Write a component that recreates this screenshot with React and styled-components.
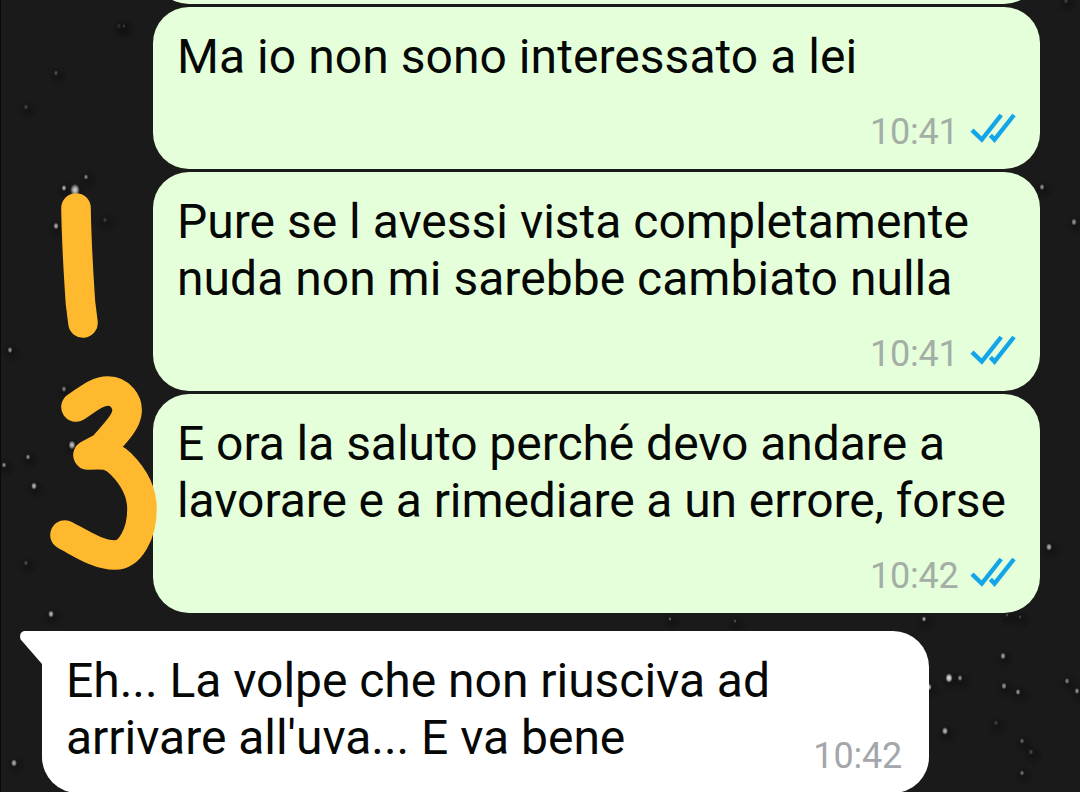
import styled, { createGlobalStyle } from "styled-components";

const GlobalStyle = createGlobalStyle`
  body {
    margin: 0;
    overflow: hidden;
    background: #1a1a1a;
  }
`;

const Chat = styled.main`
  position: relative;
  display: flex;
  flex-direction: column;
  width: 1080px;
  height: 792px;
  overflow: hidden;
  box-sizing: border-box;
  background: #1a1a1a;
  font-family: Roboto, "Liberation Sans", sans-serif;
`;

const Sky = styled.svg`
  position: absolute;
  inset: 0;
`;

const Drawing = styled.svg`
  position: absolute;
  inset: 0;
  fill: none;
  stroke: #ffb92e;
  stroke-width: 29.6px;
  stroke-linecap: round;
  stroke-linejoin: round;
`;

const Sent = styled.div`
  display: flex;
  flex-direction: column;
  align-items: flex-end;
  gap: 3px;
  padding-right: 40px;
`;

const Received = styled.div`
  display: flex;
  padding-left: 42px;
  margin-top: 18px;
`;

const Bubble = styled.article`
  position: relative;
  flex: none;
  width: 887px;
  height: ${(p) => p.$height}px;
  padding: ${(p) => (p.$incoming ? "21px 27px 0 24px" : "21px 24px 0 24px")};
  box-sizing: border-box;
  border-radius: ${(p) => (p.$incoming ? "0 36px 36px 36px" : "36px")};
  background: ${(p) => (p.$incoming ? "#ffffff" : "#e5ffdb")};
`;

const PreviousBubble = styled.div`
  width: 887px;
  height: 4px;
  overflow: hidden;
  display: flex;
  align-items: flex-end;
`;

const PreviousBody = styled.div`
  flex: none;
  width: 100%;
  height: 80px;
  border-radius: 36px;
  background: #e5ffdb;
`;

const Line = styled.p`
  margin: 0;
  height: 57px;
  line-height: 57px;
  font-size: 48px;
  letter-spacing: ${(p) => p.$spacing || 0}px;
  white-space: nowrap;
  color: #050805;
`;

const Meta = styled.div`
  display: flex;
  justify-content: flex-end;
  gap: 12px;
  height: 42px;
  margin-top: ${(p) => (p.$incoming ? -31 : 26)}px;
`;

const Time = styled.time`
  width: ${(p) => (p.$incoming ? "auto" : "88px")};
  line-height: 42px;
  font-size: 36px;
  letter-spacing: -0.2px;
  white-space: nowrap;
  color: ${(p) => (p.$incoming ? "#a3a6aa" : "#a3aea4")};
`;

const Ticks = styled.svg`
  flex: none;
  width: 46px;
  height: 30px;
  margin-top: 2px;
  fill: none;
  stroke: #12a5e8;
  stroke-width: 4.4px;
`;

const Tail = styled.svg`
  position: absolute;
  left: -22px;
  top: 0;
  width: 24px;
  height: 34px;
  fill: #ffffff;
`;

const messages = [
  {
    height: 162,
    time: "10:41",
    lines: [{ text: "Ma io non sono interessato a lei", spacing: 0.05 }],
  },
  {
    height: 219,
    time: "10:41",
    lines: [
      { text: "Pure se l avessi vista completamente" },
      { text: "nuda non mi sarebbe cambiato nulla", spacing: 0.03 },
    ],
  },
  {
    height: 219,
    time: "10:42",
    lines: [
      { text: "E ora la saluto perché devo andare a", spacing: -0.05 },
      { text: "lavorare e a rimediare a un errore, forse", spacing: -0.08 },
    ],
  },
];

// x, y, radius, opacity
const stars = [
  [119, 26, 2, 0.16],
  [124, 26, 1.5, 0.2],
  [56, 73, 2, 0.28],
  [26, 107, 2, 0.22],
  [64, 188, 2.2, 0.75],
  [75, 190, 4.4, 0.85],
  [86, 177, 2, 0.55],
  [56, 226, 2.5, 0.7],
  [105, 220, 2, 0.2],
  [10, 350, 2.2, 0.6],
  [64, 389, 2.2, 0.5],
  [72, 445, 3.2, 0.8],
  [28, 457, 2, 0.6],
  [4, 465, 2, 0.6],
  [34, 486, 2.6, 0.75],
  [26, 563, 2, 0.25],
  [51, 614, 2.6, 0.75],
  [14, 763, 2.7, 0.7],
  [1066, 1, 2, 0.2],
  [1042, 187, 2.2, 0.6],
  [1074, 222, 2.5, 0.6],
  [1049, 547, 2.7, 0.7],
  [924, 619, 2, 0.7],
  [1007, 615, 1.5, 0.25],
  [1020, 617, 1.5, 0.25],
  [1003, 656, 2.5, 0.65],
  [949, 678, 3.4, 0.95],
  [960, 678, 2.2, 0.6],
  [929, 687, 2.5, 0.8],
  [1004, 686, 2.4, 0.6],
  [1018, 692, 2.2, 0.6],
  [1067, 681, 2.2, 0.5],
  [1077, 691, 2.2, 0.6],
  [945, 731, 2.8, 0.75],
  [996, 723, 2, 0.2],
  [1022, 741, 2, 0.4],
  [1031, 752, 2, 0.25],
  [1022, 773, 2, 0.45],
  [670, 619, 1.5, 0.4],
  [735, 621, 1.5, 0.3],
];

const StarField = () => (
  <Sky width="1080" height="792" viewBox="0 0 1080 792">
    <defs>
      <radialGradient id="star">
        <stop offset="0" stopColor="#fff" />
        <stop offset="0.5" stopColor="#fff" stopOpacity="0.65" />
        <stop offset="1" stopColor="#fff" stopOpacity="0" />
      </radialGradient>
      <radialGradient id="shade">
        <stop offset="0" stopColor="#0c0c0c" />
        <stop offset="1" stopColor="#0c0c0c" stopOpacity="0" />
      </radialGradient>
    </defs>
    <rect width="1" height="792" fill="#000" opacity="0.6" />
    {stars.map(([x, y, r, opacity]) => (
      <g key={`${x}-${y}`}>
        <ellipse
          cx={x + 2}
          cy={y + 3}
          rx="11"
          ry="11"
          fill="url(#shade)"
          opacity="0.5"
        />
        <ellipse
          cx={x}
          cy={y}
          rx={r * 1.1}
          ry={r * 1.4}
          fill="url(#star)"
          opacity={opacity}
        />
      </g>
    ))}
  </Sky>
);

const ReadTicks = () => (
  <Ticks viewBox="0 0 46 30">
    <path d="M2 17.2 11.800 26.600 31.200 2" />
    <path d="M20.400 22.200 24.500 26.600 44 2" />
  </Ticks>
);

const SentMessage = ({ message }) => (
  <Bubble $height={message.height}>
    {message.lines.map((line) => (
      <Line key={line.text} $spacing={line.spacing}>
        {line.text}
      </Line>
    ))}
    <Meta>
      <Time>{message.time}</Time>
      <ReadTicks />
    </Meta>
  </Bubble>
);

const App = () => {
  return (
    <>
      <GlobalStyle />
      <Chat>
        <StarField />
        <Sent>
          <PreviousBubble>
            <PreviousBody />
          </PreviousBubble>
          {messages.map((message) => (
            <SentMessage key={message.lines[0].text} message={message} />
          ))}
        </Sent>
        <Received>
          <Bubble $incoming $height={162}>
            <Tail viewBox="0 0 24 34">
              <path d="M24 0H5C1 0-1 4 .7 8.5L22 33H24Z" />
            </Tail>
            <Line $spacing={-0.03}>Eh... La volpe che non riusciva ad</Line>
            <Line $spacing={-0.03}>arrivare all'uva... E va bene</Line>
            <Meta $incoming>
              <Time $incoming>10:42</Time>
            </Meta>
          </Bubble>
        </Received>
        <Drawing viewBox="0 0 1080 792">
          <path d="M76 208C76.500 240 78.500 274 80.500 303L83 323" />
          <path d="M76 407C87 400 96 391 108 391C120 391 128 402 127 412C126 424 110 438 103 447L88 455C104 454 111 454 121 464C135 478 142 493 142 509C142 534 130 555 115 555C98 555 82 544 65 535" />
        </Drawing>
      </Chat>
    </>
  );
};

export default App;
